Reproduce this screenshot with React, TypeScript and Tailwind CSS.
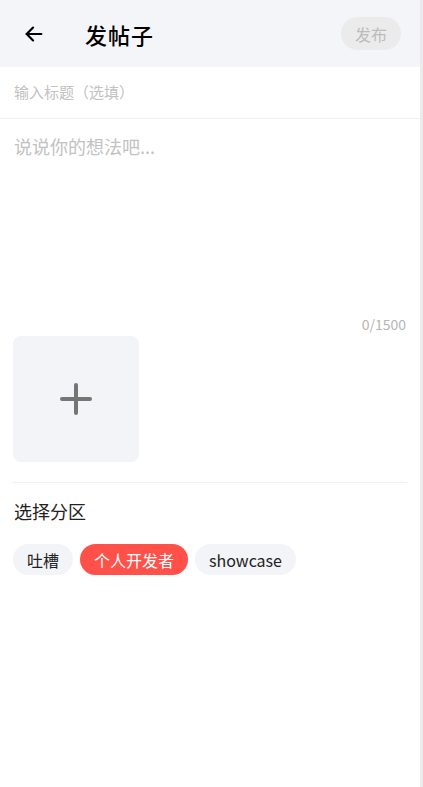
import React, { useState } from 'react';

const font = "font-['Noto_Sans_CJK_SC','Noto_Sans',sans-serif]";

const sections = ['吐槽', '个人开发者', 'showcase'];

export default function App() {
  const [title, setTitle] = useState('');
  const [content, setContent] = useState('');
  const [active, setActive] = useState('个人开发者');

  return (
    <div className={`flex min-h-[787px] w-full bg-white ${font}`}>
      <div className="flex-1 flex flex-col">
        {/* Header */}
        <div className="h-[67px] bg-[#f4f5f8] flex items-center pl-[22px] pr-[19px]">
          <button className="w-6 h-6 flex items-center justify-center text-black">
            <svg width="22" height="22" viewBox="0 0 24 24" fill="none" stroke="currentColor" strokeWidth="2.4" strokeLinecap="round" strokeLinejoin="round">
              <path d="M20 12H4" />
              <path d="M11 5l-7 7 7 7" />
            </svg>
          </button>
          <h1 className="ml-[39px] text-[22px] leading-none font-medium text-black tracking-[1px]">发帖子</h1>
          <button className="ml-auto h-[33px] w-[60px] rounded-full bg-[#ebebeb] text-[#bcbcbc] text-[16px]">发布</button>
        </div>

        {/* Title */}
        <div className="h-[52px] flex items-center px-[14px] border-b border-[#f0f0f0]">
          <input
            value={title}
            onChange={(e) => setTitle(e.target.value)}
            placeholder="输入标题（选填）"
            className="w-full outline-none text-[15px] text-[#333] placeholder:text-[#c2c2c2] bg-transparent"
          />
        </div>

        {/* Content */}
        <div className="px-[14px] pt-[14px]">
          <textarea
            value={content}
            onChange={(e) => setContent(e.target.value)}
            placeholder="说说你的想法吧..."
            className="w-full h-[178px] resize-none outline-none text-[18px] leading-[26px] text-[#333] placeholder:text-[#c2c2c2]"
          />
          <div className="text-right text-[14px] text-[#b5b5b5] -mt-[2px] leading-[20px]">{content.length}/1500</div>
        </div>

        {/* Image upload */}
        <div className="px-[13px] pt-[2px]">
          <button className="w-[126px] h-[126px] rounded-[8px] bg-[#f3f4f7] flex items-center justify-center">
            <svg width="34" height="34" viewBox="0 0 34 34" fill="none" stroke="#757575" strokeWidth="4" strokeLinecap="round">
              <path d="M17 3v28" />
              <path d="M3 17h28" />
            </svg>
          </button>
        </div>

        <div className="mx-[13px] mt-[20px] border-t border-[#f0f0f0]" />

        {/* Sections */}
        <div className="px-[14px] pt-[15px]">
          <div className="text-[18px] text-[#222] leading-[26px]">选择分区</div>
          <div className="flex gap-[7px] mt-[20px] -ml-px">
            {sections.map((s) => (
              <button
                key={s}
                onClick={() => setActive(s)}
                className={`h-[31px] px-[14px] rounded-full text-[16px] leading-none ${
                  active === s ? 'bg-[#ff5149] text-white' : 'bg-[#f3f4f7] text-[#222]'
                }`}
              >
                {s}
              </button>
            ))}
          </div>
        </div>
      </div>
      <div className="w-[3px] bg-[#ebebeb]" />
    </div>
  );
}
